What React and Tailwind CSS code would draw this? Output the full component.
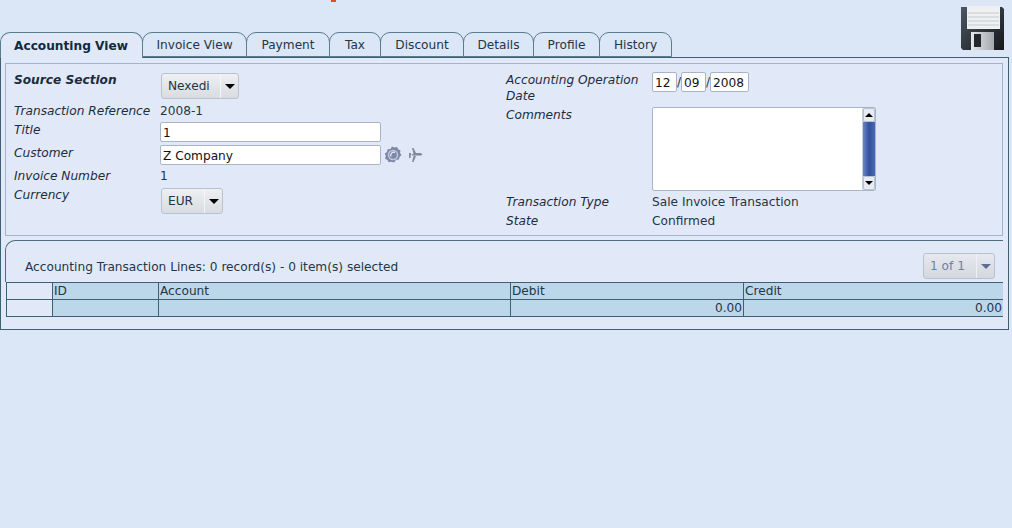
import React from "react";

const tabs = [
  { label: "Accounting View", w: "w-[143px] pr-px", active: true },
  { label: "Invoice View", w: "w-[105px]" },
  { label: "Payment", w: "w-[84px]" },
  { label: "Tax", w: "w-[52px]" },
  { label: "Discount", w: "w-[84px]" },
  { label: "Details", w: "w-[71px]" },
  { label: "Profile", w: "w-[67px]" },
  { label: "History", w: "w-[73px]" },
];

const SaveIcon = () => (
  <svg width="44" height="44" viewBox="0 0 44 44" className="block">
    <defs>
      <linearGradient id="disk" x1="0" y1="0" x2="1" y2="1">
        <stop offset="0" stopColor="#4d5862" />
        <stop offset="1" stopColor="#15181c" />
      </linearGradient>
      <linearGradient id="shutter" x1="0" y1="0" x2="1" y2="0">
        <stop offset="0" stopColor="#e6e8ea" />
        <stop offset="1" stopColor="#a4a8ac" />
      </linearGradient>
    </defs>
    <path d="M1 1h41l2 2v41H3l-2-2z" fill="url(#disk)" />
    <rect x="7" y="0" width="33" height="23" fill="#eef0f2" />
    <path d="M8 7h31M8 11h31M8 15h31M8 19h31" stroke="#c6cace" strokeWidth="1" />
    <rect x="11" y="26" width="23" height="18" fill="url(#shutter)" />
    <rect x="14" y="28" width="7" height="13" fill="#24282c" />
  </svg>
);

const Select = ({ value, className }) => (
  <div
    className={`flex h-[26px] items-center rounded-[3px] border border-[#b9c3cf] bg-gradient-to-b from-[#eef0f2] to-[#d9dce0] pl-[6px] ${className}`}
  >
    <span className="flex-1">{value}</span>
    <span className="flex h-full w-[18px] items-center justify-center border-l border-[#f4f5f6]">
      <span className="mt-[1px] h-0 w-0 border-x-[5px] border-t-[5px] border-x-transparent border-t-black" />
    </span>
  </div>
);

const Input = ({ value, className }) => (
  <div
    className={`flex items-center rounded-[2px] border border-[#a9b5c6] bg-white pl-[2px] pt-[2px] text-[#111] ${className}`}
  >
    {value}
  </div>
);

const Field = ({ label, bold, h, children }) => (
  <div className={`flex ${h}`}>
    <div className={`w-[146px] shrink-0 italic text-[#1c2c3c] ${bold ? "font-bold" : ""}`}>{label}</div>
    {children}
  </div>
);

export default function App() {
  return (
    <div className="relative h-[528px] overflow-hidden bg-[#dbe6f6] font-['DejaVu_Sans',sans-serif] text-[12.16px] leading-[16px] text-[#253545]">
      {/* bit of cut off red text at the top */}
      <div className="absolute left-[331px] top-0 h-[2px] w-[5px] bg-[#e8492a]" />

      <div className="flex h-[57px] w-[1008px] items-end justify-between">
        <div className="flex">
          {tabs.map((tab) => (
            <div
              key={tab.label}
              className={`flex items-center justify-center rounded-t-[10px] border border-[#5b7c8c] ${tab.w} ${
                tab.active
                  ? "-mb-px h-[26px] border-b-0 bg-[#e1e9f8] font-bold text-[#12293d]"
                  : "-ml-px h-[25px] bg-[#dbe6f6]"
              }`}
            >
              {tab.label}
            </div>
          ))}
        </div>
        <div className="mb-[7px] mr-[4px]">
          <SaveIcon />
        </div>
      </div>

      <div className="h-[273px] w-[1009px] border border-[#3f5f73] bg-[#e1e9f8] pl-[4px] pt-[5px]">
        <div className="flex h-[173px] w-[998px] border border-[#a3b6c8] pl-[8px]">
          <div className="w-[492px] pt-[8px]">
            <Field label="Source Section" bold h="h-[31px]">
              <Select value="Nexedi" className="ml-[1px] mt-px w-[78px]" />
            </Field>
            <Field label="Transaction Reference" h="h-[19px]">
              <span>2008-1</span>
            </Field>
            <Field label="Title" h="h-[23px]">
              <Input value="1" className="h-[20px] w-[221px]" />
            </Field>
            <Field label="Customer" h="h-[23px]">
              <Input value="Z Company" className="h-[20px] w-[221px]" />
              <svg width="18" height="18" viewBox="0 0 18 18" className="ml-[3px] mt-[1px]">
                <path
                  d="M8 0.500l2.500 1 2.500-.5 1.200 2.200 2.300 1.300-.5 2.500 1.500 2-2 1.900-.5 2.600-2.800.3L10 16.500l-2.500-.8-2.700.6-1.400-2.300-2.400-1.600.8-2.500-1-2.300 2.200-1.600.6-2.700 2.800-.2z"
                  fill="#7d87a8"
                />
                <circle cx="9" cy="9" r="4.500" fill="none" stroke="#c3c9dc" strokeWidth="1.400" />
                <path d="M7 10.500a3 3 0 0 1 4-4" fill="none" stroke="#e8ecf6" strokeWidth="1.300" />
              </svg>
              <svg width="16" height="16" viewBox="0 0 16 16" className="ml-[5px] mt-[2px]">
                <path
                  d="M1 8.500h2l1.500-1 .5 1h9l1.500-1-1.500-1.500H9L6.500 1H5l1.500 5.500L5 7.500zM6.500 9H9l-2.500 6H5z M2 6v5h1.500L4 6z"
                  fill="#7f8a9a"
                />
              </svg>
            </Field>
            <Field label="Invoice Number" h="h-[19px]">
              <span>1</span>
            </Field>
            <Field label="Currency" h="h-[26px]">
              <Select value="EUR" className="ml-[1px] mt-px w-[62px]" />
            </Field>
          </div>

          <div className="w-[496px] pt-[8px]">
            <Field label="Accounting Operation Date" h="h-[35px]">
              <div className="flex h-[20px] items-center">
                <Input value="12" className="h-[20px] w-[25px]" />
                <span className="w-[4px]">/</span>
                <Input value="09" className="h-[20px] w-[25px]" />
                <span className="w-[4px]">/</span>
                <Input value="2008" className="h-[20px] w-[39px]" />
              </div>
            </Field>
            <Field label="Comments" h="h-[87px]">
              <div className="flex h-[84px] w-[224px] justify-end rounded-[2px] border border-[#a9b5c6] bg-white">
                <div className="flex w-[13px] flex-col rounded-[2px] border-l border-[#c4cede] bg-[#cdd6e8]">
                  <div className="flex h-[14px] items-center justify-center rounded-[2px] border border-[#b7c3d6] bg-[#e8ecf2]">
                    <span className="h-0 w-0 border-x-[4px] border-b-[4px] border-x-transparent border-b-black" />
                  </div>
                  <div className="flex-1 bg-gradient-to-r from-[#6a86c4] via-[#34509f] to-[#4a68b4]" />
                  <div className="flex h-[14px] items-center justify-center rounded-[2px] border border-[#b7c3d6] bg-[#e8ecf2]">
                    <span className="h-0 w-0 border-x-[4px] border-t-[4px] border-x-transparent border-t-black" />
                  </div>
                </div>
              </div>
            </Field>
            <Field label="Transaction Type" h="h-[19px]">
              <span>Sale Invoice Transaction</span>
            </Field>
            <Field label="State" h="h-[19px]">
              <span>Confirmed</span>
            </Field>
          </div>
        </div>

        <div className="mt-[4px] w-[998px]">
          <div className="flex h-[42px] items-center justify-between rounded-tl-[10px] border-l border-t border-[#4f6d80] pl-[19px] pr-[8px] pt-[9px]">
            <span className="mt-[2px]">Accounting Transaction Lines: 0 record(s) - 0 item(s) selected</span>
            <div className="flex h-[26px] w-[72px] items-center rounded-[3px] border border-[#b9c3cf] bg-gradient-to-b from-[#e6e9ee] to-[#d3d8df] pl-[6px] text-[#6f7fa0]">
              <span className="flex-1">1 of 1</span>
              <span className="flex h-full w-[18px] items-center justify-center border-l border-[#eef0f3]">
                <span className="mt-[1px] h-0 w-0 border-x-[5px] border-t-[5px] border-x-transparent border-t-[#5c6c94]" />
              </span>
            </div>
          </div>
          <div className="ml-px border-l border-[#3f5f73]">
            <div className="grid grid-cols-[46px_106px_352px_233px_259px] border-y border-[#3f5f73]">
              <div className="border-r border-[#3f5f73]" />
              <div className="border-r border-[#3f5f73] bg-[#bcd7ea] pl-px">ID</div>
              <div className="border-r border-[#3f5f73] bg-[#bcd7ea] pl-px">Account</div>
              <div className="border-r border-[#3f5f73] bg-[#bcd7ea] pl-px">Debit</div>
              <div className="bg-[#bcd7ea] pl-px">Credit</div>
            </div>
            <div className="grid grid-cols-[46px_106px_352px_233px_259px] border-b border-[#3f5f73]">
              <div className="h-[16px] border-r border-[#3f5f73]" />
              <div className="border-r border-[#3f5f73] bg-[#bcd7ea]" />
              <div className="border-r border-[#3f5f73] bg-[#bcd7ea]" />
              <div className="border-r border-[#3f5f73] bg-[#bcd7ea] pr-px text-right">0.00</div>
              <div className="bg-[#bcd7ea] pr-px text-right">0.00</div>
            </div>
          </div>
        </div>
      </div>
    </div>
  );
}
